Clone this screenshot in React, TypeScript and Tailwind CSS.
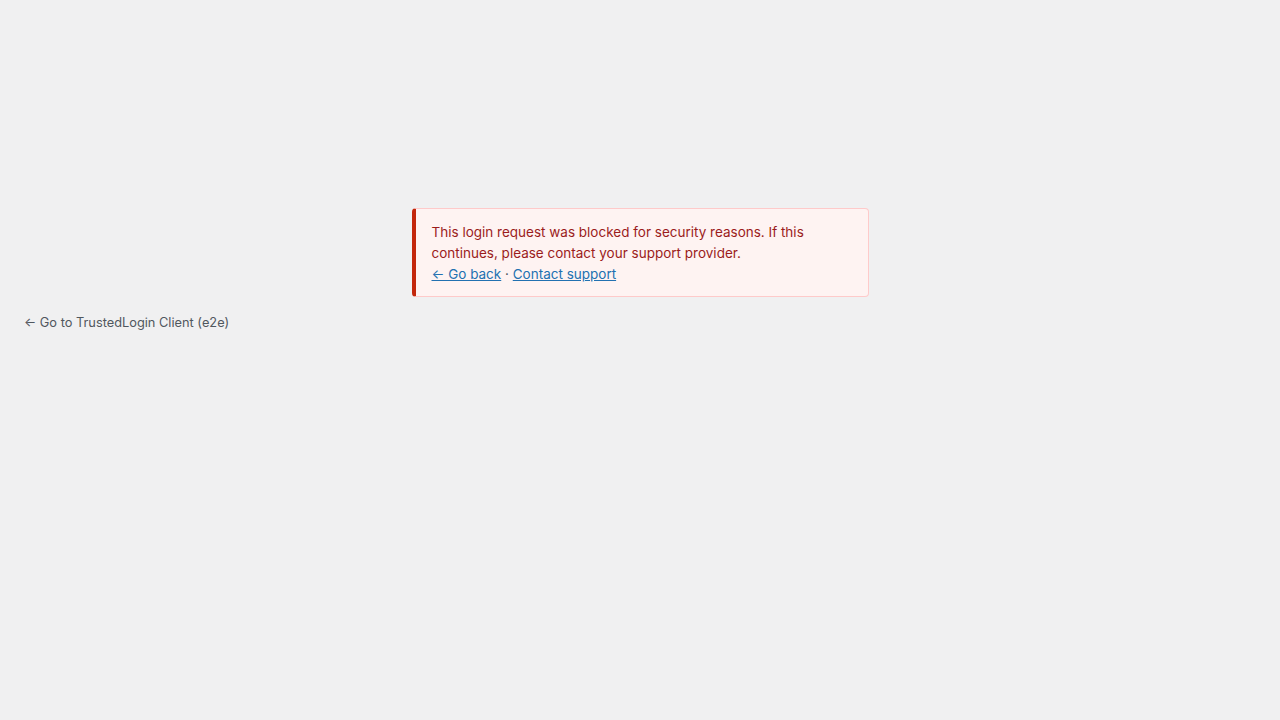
export default function App() {
  return (
    <div
      className="min-h-screen w-full bg-[#f0f0f1] text-[13px] leading-[21px]"
      style={{ fontFamily: 'Inter, "Noto Sans", sans-serif' }}
    >
      <div className="flex justify-center pt-[208px]">
        <div className="w-[457px] rounded-[4px] border border-[#fecaca] border-l-4 border-l-[#c3270c] bg-[#fef3f2] pt-[13px] pb-[11px] pl-[16px] pr-[16px] text-[13.5px] text-[#9b1c1c]">
          <p>
            This login request was blocked for security reasons. If this continues, please contact your support
            provider.
          </p>
          <p>
            <a href="#" className="text-[#2271b1] underline">
              ← Go back
            </a>{' '}
            <span className="text-[#50575e]">·</span>{' '}
            <a href="#" className="text-[#2271b1] underline">
              Contact support
            </a>
          </p>
        </div>
      </div>
      <div className="px-6 pt-[15px]">
        <a href="#" className="text-[12.8px] text-[#50575e]">
          ← Go to TrustedLogin Client (e2e)
        </a>
      </div>
    </div>
  );
}
